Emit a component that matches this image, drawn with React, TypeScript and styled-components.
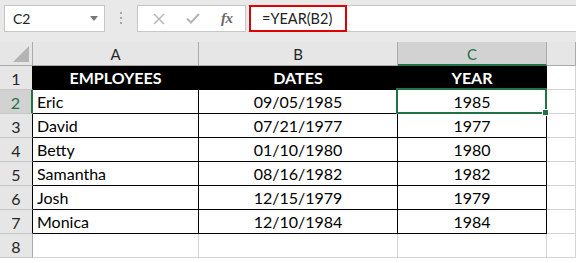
import { Fragment } from "react";
import styled, { createGlobalStyle, css } from "styled-components";

const GlobalStyle = createGlobalStyle`
  html, body {
    margin: 0;
    padding: 0;
    background: #ffffff;
  }
`;

const Window = styled.div`
  width: 576px;
  height: 263px;
  overflow: hidden;
  background: #ffffff;
  font-family: Lato, "Liberation Sans", sans-serif;
  color: #000;
`;

const FormulaRow = styled.div`
  display: flex;
  align-items: flex-start;
  height: 42px;
  box-sizing: border-box;
  padding: 5px 0 0 4px;
  background: #e9e9e9;
`;

const NameBox = styled.div`
  box-sizing: border-box;
  width: 101px;
  height: 27px;
  background: #fff;
  border: 1px solid #c6c6c6;
  display: flex;
  align-items: center;
  justify-content: space-between;
  padding: 0 6px 0 8px;
  font-size: 14px;
  color: #222;
`;

const Grip = styled.div`
  width: 32px;
  height: 27px;
  display: flex;
  align-items: center;
  justify-content: center;
  svg {
    display: block;
  }
`;

const ButtonGroup = styled.div`
  box-sizing: border-box;
  width: 109px;
  height: 27px;
  background: #fff;
  border: 1px solid #c6c6c6;
  display: flex;
  align-items: center;
  padding-left: 11px;
  gap: 14px;
`;

const IconButton = styled.span`
  width: 20px;
  display: flex;
  justify-content: center;
  svg {
    display: block;
  }
`;

const Fx = styled.span`
  font-family: "Liberation Serif", serif;
  font-style: italic;
  font-weight: 700;
  font-size: 15px;
  color: #6a6a6a;
  margin-left: 4px;
  letter-spacing: -0.5px;
`;

const FormulaInput = styled.div`
  flex: 1;
  height: 27px;
  margin-left: 2px;
  background: #fff;
  border-top: 1px solid #c6c6c6;
  border-bottom: 1px solid #c6c6c6;
  box-sizing: border-box;
  display: flex;
  align-items: stretch;
  padding-left: 1px;
`;

const FormulaText = styled.span`
  box-sizing: border-box;
  width: 98px;
  margin-top: -1px;
  margin-bottom: -1px;
  border: 2px solid #e00000;
  display: flex;
  align-items: center;
  padding-left: 11px;
  font-size: 14.5px;
  color: #222;
`;

const Sheet = styled.div`
  display: grid;
  grid-template-columns: 33px 166px 199px 149px 1fr;
  grid-template-rows: 24px;
  grid-auto-rows: 24px;
`;

const Corner = styled.div`
  box-sizing: border-box;
  background: #e6e6e6;
  border-right: 1px solid #ababab;
  border-bottom: 1px solid #ababab;
  display: flex;
  align-items: flex-end;
  justify-content: flex-end;
  padding: 0 3px 3px 0;
  svg {
    display: block;
  }
`;

const ColHead = styled.div<{ $selected?: boolean }>`
  box-sizing: border-box;
  background: ${(p) => (p.$selected ? "#d2d2d2" : "#e6e6e6")};
  color: ${(p) => (p.$selected ? "#217346" : "#262626")};
  border-right: 1px solid #ababab;
  border-bottom: ${(p) =>
    p.$selected ? "2px solid #217346" : "1px solid #ababab"};
  display: flex;
  align-items: center;
  justify-content: center;
  font-size: 15px;
  padding-top: 1px;
`;

const RowHead = styled.div<{ $selected?: boolean; $inTable?: boolean }>`
  box-sizing: border-box;
  background: ${(p) => (p.$selected ? "#d2d2d2" : "#e6e6e6")};
  color: ${(p) => (p.$selected ? "#217346" : "#262626")};
  border-bottom: 1px solid #c6c6c6;
  border-right: ${(p) =>
    p.$selected
      ? "2px solid #217346"
      : p.$inTable
      ? "1px solid #000"
      : "1px solid #ababab"};
  display: flex;
  align-items: center;
  justify-content: center;
  font-size: 16px;
  padding-top: 1px;
`;

const Cell = styled.div<{
  $kind: "header" | "data" | "empty";
  $align?: "left" | "center";
  $active?: boolean;
}>`
  position: relative;
  box-sizing: border-box;
  display: flex;
  align-items: flex-end;
  padding: 0 4px 1px;
  font-size: 16px;
  line-height: 20px;
  white-space: nowrap;
  justify-content: ${(p) => (p.$align === "center" ? "center" : "flex-start")};
  border-right: 1px solid #d4d4d4;
  border-bottom: 1px solid #d4d4d4;

  ${(p) =>
    p.$kind === "header" &&
    css`
      background: #000;
      color: #fff;
      font-weight: 700;
      border-right-color: #000;
      border-bottom-color: #000;
    `}
  ${(p) =>
    p.$kind === "data" &&
    css`
      border-right-color: #000;
      border-bottom-color: #000;
    `}
  ${(p) =>
    p.$active &&
    css`
      &::after {
        content: "";
        position: absolute;
        top: -2px;
        left: -2px;
        right: -1px;
        bottom: -1px;
        border: 2px solid #217346;
      }
      &::before {
        content: "";
        position: absolute;
        right: -3px;
        bottom: -3px;
        width: 5px;
        height: 5px;
        background: #217346;
        border: 1px solid #fff;
        z-index: 1;
      }
    `}
`;

const employees = [
  ["Eric", "09/05/1985", "1985"],
  ["David", "07/21/1977", "1977"],
  ["Betty", "01/10/1980", "1980"],
  ["Samantha", "08/16/1982", "1982"],
  ["Josh", "12/15/1979", "1979"],
  ["Monica", "12/10/1984", "1984"],
];

const columns = ["A", "B", "C", ""];

const App = () => {
  return (
    <Window>
      <GlobalStyle />
      <FormulaRow>
        <NameBox>
          <span>C2</span>
          <svg width="8" height="5" viewBox="0 0 8 5">
            <path d="M0 0 H8 L4 5 Z" fill="#777" />
          </svg>
        </NameBox>
        <Grip>
          <svg width="3" height="13" viewBox="0 0 3 13">
            <rect x="0" y="0" width="2" height="2" fill="#a8a8a8" />
            <rect x="0" y="5" width="2" height="2" fill="#a8a8a8" />
            <rect x="0" y="10" width="2" height="2" fill="#a8a8a8" />
          </svg>
        </Grip>
        <ButtonGroup>
          <IconButton>
            <svg width="12" height="12" viewBox="0 0 12 12">
              <path
                d="M1 1 L11 11 M11 1 L1 11"
                stroke="#b5b5b5"
                strokeWidth="1.4"
                fill="none"
              />
            </svg>
          </IconButton>
          <IconButton>
            <svg width="14" height="11" viewBox="0 0 14 11">
              <path
                d="M1 5.5 L5 9.5 L13 1"
                stroke="#b5b5b5"
                strokeWidth="2"
                fill="none"
              />
            </svg>
          </IconButton>
          <Fx>fx</Fx>
        </ButtonGroup>
        <FormulaInput>
          <FormulaText>=YEAR(B2)</FormulaText>
        </FormulaInput>
      </FormulaRow>

      <Sheet>
        <Corner>
          <svg width="16" height="16" viewBox="0 0 16 16">
            <path d="M16 0 V16 H0 Z" fill="#b4b4b4" />
          </svg>
        </Corner>
        {columns.map((c, i) => (
          <ColHead key={i} $selected={c === "C"}>
            {c}
          </ColHead>
        ))}

        <RowHead $inTable>1</RowHead>
        <Cell $kind="header" $align="center">
          EMPLOYEES
        </Cell>
        <Cell $kind="header" $align="center">
          DATES
        </Cell>
        <Cell $kind="header" $align="center">
          YEAR
        </Cell>
        <Cell $kind="empty" />

        {employees.map(([name, date, year], i) => (
          <Fragment key={name}>
            <RowHead $inTable $selected={i === 0}>
              {i + 2}
            </RowHead>
            <Cell $kind="data">{name}</Cell>
            <Cell $kind="data" $align="center">
              {date}
            </Cell>
            <Cell $kind="data" $align="center" $active={i === 0}>
              {year}
            </Cell>
            <Cell $kind="empty" />
          </Fragment>
        ))}

        <RowHead>8</RowHead>
        <Cell $kind="empty" />
        <Cell $kind="empty" />
        <Cell $kind="empty" />
        <Cell $kind="empty" />
      </Sheet>
    </Window>
  );
};

export default App;
